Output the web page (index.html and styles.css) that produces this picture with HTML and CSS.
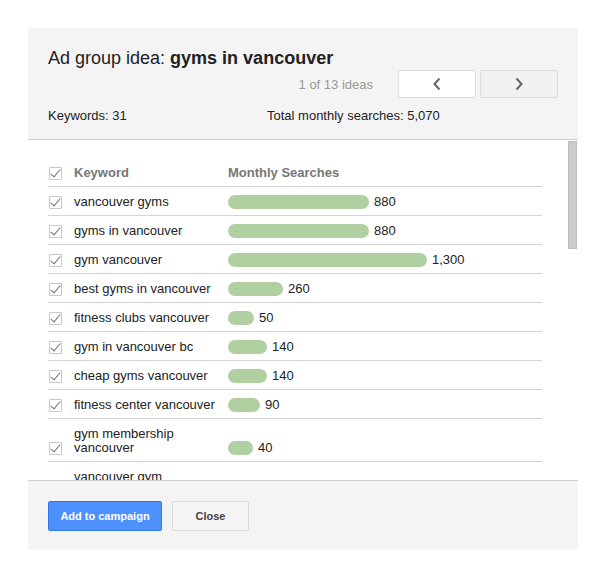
FILE: index.html
```html
<!DOCTYPE html>
<html>
<head>
<meta charset="utf-8">
<link rel="stylesheet" href="styles.css">
</head>
<body>
<div class="panel">
  <div class="head">
    <div class="title">Ad group idea: <b>gyms in vancouver</b></div>
    <div class="nav">
      <span class="count">1 of 13 ideas</span>
      <button class="navbtn prev"><svg width="10" height="14" viewBox="0 0 10 14"><path d="M7.5 1.5 L2.5 7 L7.5 12.5" fill="none" stroke="#666" stroke-width="2"/></svg></button>
      <button class="navbtn next"><svg width="10" height="14" viewBox="0 0 10 14"><path d="M2.5 1.5 L7.5 7 L2.5 12.5" fill="none" stroke="#666" stroke-width="2"/></svg></button>
    </div>
    <div class="stats">
      <span class="kw">Keywords: 31</span>
      <span>Total monthly searches: 5,070</span>
    </div>
  </div>
  <div class="list">
    <div class="rows">
      <div class="row hdr">
        <span class="cb"></span>
        <span class="name">Keyword</span>
        <span class="ms">Monthly Searches</span>
      </div>
      <div class="row"><span class="cb"></span><span class="name">vancouver gyms</span><span class="ms"><span class="bar" style="width:141px"></span>880</span></div>
      <div class="row"><span class="cb"></span><span class="name">gyms in vancouver</span><span class="ms"><span class="bar" style="width:141px"></span>880</span></div>
      <div class="row"><span class="cb"></span><span class="name">gym vancouver</span><span class="ms"><span class="bar" style="width:199px"></span>1,300</span></div>
      <div class="row"><span class="cb"></span><span class="name">best gyms in vancouver</span><span class="ms"><span class="bar" style="width:55px"></span>260</span></div>
      <div class="row"><span class="cb"></span><span class="name">fitness clubs vancouver</span><span class="ms"><span class="bar" style="width:26px"></span>50</span></div>
      <div class="row"><span class="cb"></span><span class="name">gym in vancouver bc</span><span class="ms"><span class="bar" style="width:39px"></span>140</span></div>
      <div class="row"><span class="cb"></span><span class="name">cheap gyms vancouver</span><span class="ms"><span class="bar" style="width:39px"></span>140</span></div>
      <div class="row"><span class="cb"></span><span class="name">fitness center vancouver</span><span class="ms"><span class="bar" style="width:32px"></span>90</span></div>
      <div class="row"><span class="cb"></span><span class="name">gym membership vancouver</span><span class="ms"><span class="bar" style="width:25px"></span>40</span></div>
      <div class="row"><span class="cb"></span><span class="name">vancouver gym membership</span><span class="ms"><span class="bar" style="width:25px"></span>40</span></div>
    </div>
    <div class="thumb"></div>
  </div>
  <div class="foot">
    <button class="btn primary">Add to campaign</button>
    <button class="btn">Close</button>
  </div>
</div>
</body>
</html>
```

FILE: styles.css
```css
* { box-sizing: border-box; }
body {
  margin: 0;
  background: #fff;
  font-family: "Liberation Sans", Arial, sans-serif;
  color: #222;
  font-size: 13px;
}
.panel {
  margin: 28px 0 0 28px;
  width: 550px;
}
.head {
  background: #f4f4f4;
  border-bottom: 1px solid #cfcfcf;
  padding: 19px 20px 15px 20px;
}
.title {
  font-size: 18px;
  line-height: 22px;
  color: #222;
}
.title b { font-weight: bold; }
.nav {
  display: flex;
  justify-content: flex-end;
  align-items: center;
  margin-top: 1px;
  height: 28px;
}
.count {
  color: #999;
  font-size: 13px;
  margin-right: 25px;
}
.navbtn {
  width: 78px;
  height: 28px;
  border: 1px solid #dcdcdc;
  border-radius: 2px;
  background: #fff;
  display: flex;
  align-items: center;
  justify-content: center;
  padding: 0;
}
.navbtn.next {
  background: #f1f1f1;
  margin-left: 4px;
}
.stats {
  display: flex;
  margin-top: 10px;
  line-height: 16px;
}
.kw { width: 219px; }
.list {
  position: relative;
  height: 340px;
  overflow: hidden;
  background: #fff;
}
.rows {
  padding: 18px 0 0 20px;
  width: 514px;
}
.row {
  display: flex;
  align-items: flex-end;
  border-bottom: 1px solid #d4d4d4;
  padding: 8px 0 6px;
  line-height: 14px;
}
.row.hdr {
  font-weight: bold;
  color: #777;
}
.cb {
  flex: none;
  width: 13px;
  height: 13px;
  margin: 0 12px 0 1px;
  border: 1px solid #c8c8c8;
  border-radius: 1px;
  background: #fff;
  position: relative;
}
.cb::after {
  content: "";
  position: absolute;
  left: 3px;
  top: -1px;
  width: 4px;
  height: 9px;
  border-right: 1.6px solid #707070;
  border-bottom: 1.6px solid #707070;
  transform: rotate(40deg);
  transform-origin: 50% 50%;
}
.name {
  width: 154px;
  flex: none;
  padding-right: 10px;
}
.ms {
  display: flex;
  align-items: center;
}
.bar {
  display: inline-block;
  height: 14px;
  border-radius: 7px;
  background: #b1d0a2;
  margin-right: 5px;
}
.thumb {
  position: absolute;
  left: 540px;
  top: 1px;
  width: 9px;
  height: 108px;
  background: #cbcbcb;
  border: 1px solid #bdbdbd;
}
.foot {
  background: #f4f4f4;
  border-top: 1px solid #cfcfcf;
  padding: 20px 20px 19px 20px;
  display: flex;
  gap: 10px;
}
.btn {
  height: 30px;
  padding: 0;
  white-space: nowrap;
  border: 1px solid #dcdcdc;
  border-radius: 2px;
  background: #f5f5f5;
  color: #444;
  font-family: "Liberation Sans", Arial, sans-serif;
  font-size: 11px;
  font-weight: bold;
  width: 77px;
}
.btn.primary {
  width: 114px;
  background: #4d90fe;
  border-color: #3079ed;
  color: #fff;
}
```
